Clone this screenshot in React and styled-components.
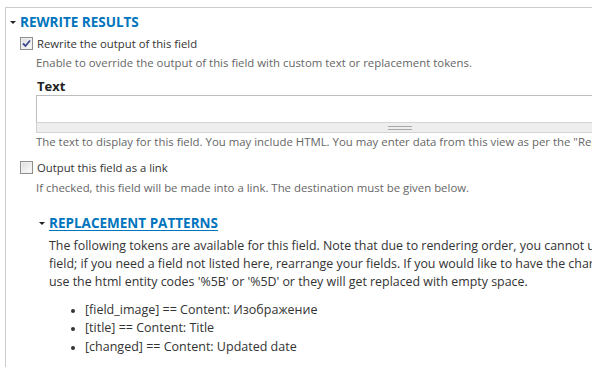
import React from "react";
import styled, { createGlobalStyle } from "styled-components";

const GlobalStyle = createGlobalStyle`
  html, body {
    margin: 0;
    padding: 0;
    background: #fff;
  }
  body {
    font-family: "Open Sans", "DejaVu Sans", sans-serif;
    color: #333;
    overflow: hidden;
  }
`;

const Page = styled.div`
  width: 592px;
  height: 367px;
  overflow: hidden;
  padding: 7px 0 0 5px;
  box-sizing: border-box;
`;

const Fieldset = styled.section`
  width: 820px;
  border-top: 1px solid #ccc;
  border-left: 1px solid #ccc;
  padding: 5px 0 40px 14px;
`;

const Legend = styled.div`
  display: flex;
  align-items: center;
  margin-left: -10px;
  height: 18px;
  font-size: 13.5px;
  font-weight: 700;
  text-transform: uppercase;
  color: #0074bd;
  text-decoration: ${({ $link }) => ($link ? "underline" : "none")};
  text-underline-offset: 2px;
`;

const Toggle = styled.span`
  width: 10px;
  display: flex;
  &::before {
    content: "";
    display: block;
    border-left: 3px solid transparent;
    border-right: 3px solid transparent;
    border-top: 3px solid #222;
  }
`;

const Row = styled.label`
  display: flex;
  align-items: center;
  height: 18px;
  margin-top: ${({ $top }) => $top}px;
  font-size: 11.3px;
  color: #333;
`;

const Box = styled.span`
  width: 11px;
  height: 11px;
  margin-right: 4px;
  border: 1px solid #8e8f8f;
  background: linear-gradient(135deg, #dcdcdc 0%, #f4f4f4 70%, #fff 100%);
  box-shadow: inset 0 0 0 1px #f0f0f0;
  display: flex;
  align-items: center;
  justify-content: center;
`;

const Description = styled.div`
  margin-left: 16px;
  margin-top: ${({ $top }) => $top}px;
  line-height: 16px;
  font-size: 11.4px;
  color: #666;
  white-space: nowrap;
`;

const FieldLabel = styled.div`
  margin-left: 17px;
  margin-top: 7px;
  line-height: 16px;
  font-size: 13px;
  font-weight: 700;
  color: #222;
`;

const TextArea = styled.div`
  margin-left: 16px;
  margin-top: 1px;
  width: 728px;
`;

const Input = styled.div`
  height: 26px;
  border: 1px solid #bdbdbd;
  border-bottom: none;
  background: #fff;
`;

const Grippie = styled.div`
  height: 9px;
  border: 1px solid #d4d4d4;
  background: #eee;
  display: flex;
  align-items: center;
  justify-content: center;
  &::before {
    content: "";
    width: 24px;
    height: 2px;
    border-top: 1px solid #a8a8a8;
    border-bottom: 1px solid #a8a8a8;
  }
`;

const Inner = styled.div`
  margin-left: 29px;
  margin-top: 18px;
`;

const Paragraph = styled.p`
  margin: 5px 0 0;
  font-size: 12.4px;
  line-height: 18px;
  color: #333;
  white-space: nowrap;
`;

const List = styled.ul`
  margin: 10px 0 0;
  padding-left: 36px;
  font-size: 12.5px;
  line-height: 18.3px;
  color: #333;
  li::marker {
    font-size: 10px;
  }
`;

function Checkbox({ checked }) {
  return (
    <Box>
      {checked && (
        <svg width="9" height="9" viewBox="0 0 9 9">
          <path d="M1 4.5 L3.5 7 L8 1.5" fill="none" stroke="#3b4a8c" strokeWidth="1.8" />
        </svg>
      )}
    </Box>
  );
}

const tokens = [
  "[field_image] == Content: Изображение",
  "[title] == Content: Title",
  "[changed] == Content: Updated date",
];

export default function App() {
  return (
    <>
      <GlobalStyle />
      <Page>
        <Fieldset>
          <Legend>
            <Toggle />
            Rewrite results
          </Legend>
          <Row $top={3}>
            <Checkbox checked />
            Rewrite the output of this field
          </Row>
          <Description $top={3}>
            Enable to override the output of this field with custom text or replacement tokens.
          </Description>
          <FieldLabel>Text</FieldLabel>
          <TextArea>
            <Input />
            <Grippie />
          </TextArea>
          <Description $top={1}>
            The text to display for this field. You may include HTML. You may enter data from this view as per the "Replacement patterns" below.
          </Description>
          <Row $top={8}>
            <Checkbox />
            Output this field as a link
          </Row>
          <Description $top={4}>
            If checked, this field will be made into a link. The destination must be given below.
          </Description>
          <Inner>
            <Legend $link>
              <Toggle />
              Replacement patterns
            </Legend>
            <Paragraph>
              The following tokens are available for this field. Note that due to rendering order, you cannot use fields that come after this
              <br />
              field; if you need a field not listed here, rearrange your fields. If you would like to have the characters '[' and ']' please
              <br />
              use the html entity codes '%5B' or '%5D' or they will get replaced with empty space.
            </Paragraph>
            <List>
              {tokens.map((t) => (
                <li key={t}>{t}</li>
              ))}
            </List>
          </Inner>
        </Fieldset>
      </Page>
    </>
  );
}
